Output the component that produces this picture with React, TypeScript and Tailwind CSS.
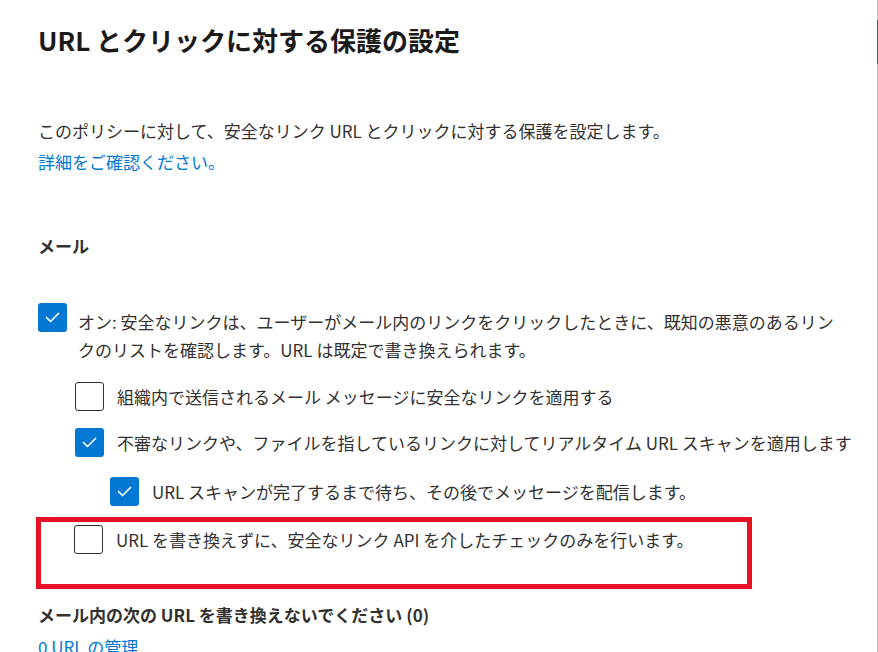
import { ReactNode } from "react";

function Box({ checked }: { checked?: boolean }) {
  if (checked) {
    return (
      <div className="w-[29px] h-[29px] shrink-0 rounded-[3px] bg-[#0078d4]">
        <svg viewBox="0 0 29 29" className="w-[29px] h-[29px]">
          <path d="M8.5 14.5 L12.5 18.5 L20.5 10.5" fill="none" stroke="white" strokeWidth="1.7" strokeLinecap="round" strokeLinejoin="round" />
        </svg>
      </div>
    );
  }
  return <div className="w-[29px] h-[29px] shrink-0 rounded-[3px] border border-[#323130] bg-white" />;
}

function Row({ checked, children, className }: { checked?: boolean; children: ReactNode; className?: string }) {
  return (
    <div className={"flex items-center gap-[13px] h-[29px] " + (className ?? "")}>
      <Box checked={checked} />
      <span className="whitespace-nowrap leading-[29px]">{children}</span>
    </div>
  );
}

export default function App() {
  return (
    <div className="w-[878px] h-[652px] overflow-hidden bg-white flex font-['Noto_Sans_CJK_JP',sans-serif] text-[17px] text-[#323130]">
      <div className="flex-1 pl-[38px] pt-[23px]">
        <h1 className="text-[26px] leading-[34px] font-semibold text-[#1b1a19]">URL とクリックに対する保護の設定</h1>

        <p className="mt-[58px] leading-[31px]">このポリシーに対して、安全なリンク URL とクリックに対する保護を設定します。</p>
        <a className="block leading-[31px] text-[#0078d4]">詳細をご確認ください。</a>

        <h2 className="mt-[55px] leading-[28px] font-semibold">メール</h2>

        {/* On/off main option */}
        <div className="mt-[43px] flex items-start gap-[11px]">
          <Box checked />
          <p className="mt-[5px] max-w-[765px] leading-[28px]">
            オン: 安全なリンクは、ユーザーがメール内のリンクをクリックしたときに、既知の悪意のあるリンクのリストを確認します。URL は既定で書き換えられます。
          </p>
        </div>

        <div className="pl-[37px]">
          <Row className="mt-[18px]">組織内で送信されるメール メッセージに安全なリンクを適用する</Row>
          <Row checked className="mt-[17px]">不審なリンクや、ファイルを指しているリンクに対してリアルタイム URL スキャンを適用します</Row>
          <Row checked className="mt-[20px] ml-[35px]">URL スキャンが完了するまで待ち、その後でメッセージを配信します。</Row>
        </div>

        {/* highlighted option */}
        <div className="mt-[11px] -ml-[2px] w-[716px] h-[72px] border-[5px] border-[#e81123] pl-[33px] pt-[3px]">
          <Row>URL を書き換えずに、安全なリンク API を介したチェックのみを行います。</Row>
        </div>

        <h2 className="mt-[12px] leading-[28px] font-semibold">メール内の次の URL を書き換えないでください (0)</h2>
        <a className="block mt-[4px] leading-[28px] text-[#0078d4]">0 URL の管理</a>
      </div>

      {/* scrollbar edge */}
      <div className="w-px h-full bg-[#c4c4c4] flex flex-col">
        <div className="mt-[20px] h-[44px] bg-[#4d5f5a]" />
      </div>
    </div>
  );
}
